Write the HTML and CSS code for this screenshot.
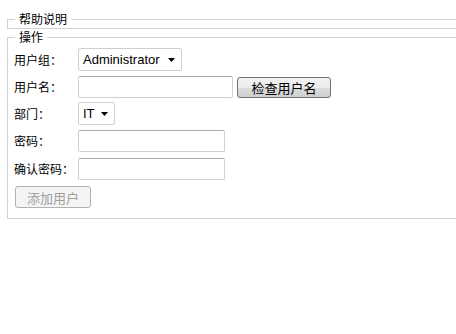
FILE: index.html
```html
<!DOCTYPE html>
<html lang="zh-CN">
<head>
<meta charset="utf-8">
<title>添加用户</title>
<link rel="stylesheet" href="styles.css">
</head>
<body>
<div class="page">
  <fieldset class="group group-help">
    <legend>帮助说明</legend>
  </fieldset>
  <fieldset class="group group-ops">
    <legend>操作</legend>
    <div class="form">
      <div class="row r1">
        <span class="label">用户组：</span>
        <div class="select sel-group"><span>Administrator</span><svg width="7" height="4" viewBox="0 0 7 4"><path d="M0 0h7L3.5 4z" fill="#000"/></svg></div>
      </div>
      <div class="row r2">
        <span class="label">用户名：</span>
        <input class="input in-name" type="text">
        <button class="btn" type="button">检查用户名</button>
      </div>
      <div class="row r3">
        <span class="label">部门：</span>
        <div class="select sel-dept"><span>IT</span><svg width="7" height="4" viewBox="0 0 7 4"><path d="M0 0h7L3.5 4z" fill="#000"/></svg></div>
      </div>
      <div class="row r4">
        <span class="label">密码：</span>
        <input class="input in-pw" type="password">
      </div>
      <div class="row r5">
        <span class="label">确认密码：</span>
        <input class="input in-pw" type="password">
      </div>
      <div class="row r6">
        <button class="btn btn-disabled" type="button" disabled>添加用户</button>
      </div>
    </div>
  </fieldset>
</div>
</body>
</html>
```

FILE: styles.css
```css
html, body {
  margin: 0;
  padding: 0;
  background: #fff;
  overflow: hidden;
}
body {
  font-family: "Noto Sans CJK SC", "Liberation Sans", sans-serif;
  font-size: 12px;
  color: #000;
}
.page {
  padding: 11px 0 0 7px;
  width: 480px;
}
.group {
  margin: 0;
  border: 1px solid #d2d2d2;
  padding: 0 0 0 6px;
  min-width: 0;
}
.group legend {
  font-size: 12px;
  line-height: 16px;
  padding: 0 4px;
  margin-left: 1px;
}
.group-help {
  height: 0;
  padding-bottom: 1px;
}
.group-ops {
  padding-top: 3px;
  padding-bottom: 10px;
}
.form {
  display: flex;
  flex-direction: column;
}
.row {
  display: flex;
  align-items: center;
  height: 23px;
}
.r2 { margin-top: 5px; height: 22px; }
.r3 { margin-top: 4px; }
.r4 { margin-top: 5px; height: 22px; }
.r5 { margin-top: 6px; height: 22px; }
.r6 { margin-top: 6px; height: 22px; padding-left: 1px; }
.label {
  width: 64px;
  flex: none;
  line-height: 16px;
}
.select {
  box-sizing: border-box;
  height: 23px;
  display: flex;
  align-items: center;
  justify-content: space-between;
  border: 1px solid #cfcfcf;
  border-radius: 2px;
  background: #fff;
  font-family: "Liberation Sans", Arial, sans-serif;
  font-size: 13px;
  padding: 0 6px 0 4px;
}
.sel-group { width: 104px; }
.sel-dept { width: 37px; }
.input {
  box-sizing: border-box;
  height: 22px;
  margin: 0;
  border: 1px solid #d0d0d0;
  border-top-color: #ababab;
  border-radius: 2px;
  background: #fff;
  padding: 0 3px;
  font-size: 13px;
}
.in-name { width: 155px; }
.in-pw { width: 147px; }
.btn {
  box-sizing: border-box;
  height: 21px;
  margin: 0 0 0 4px;
  padding: 0;
  width: 94px;
  border: 1px solid #707070;
  border-radius: 3px;
  background: linear-gradient(#f2f2f2, #ebebeb 50%, #dddddd 50%, #cfcfcf);
  font-family: "Noto Sans CJK SC", sans-serif;
  font-size: 13px;
  line-height: 19px;
  color: #000;
  letter-spacing: 0;
}
.btn-disabled {
  margin: 0;
  width: 76px;
  height: 22px;
  border-color: #adb2b5;
  background: #f4f4f4;
  color: #a0a0a0;
}
```
